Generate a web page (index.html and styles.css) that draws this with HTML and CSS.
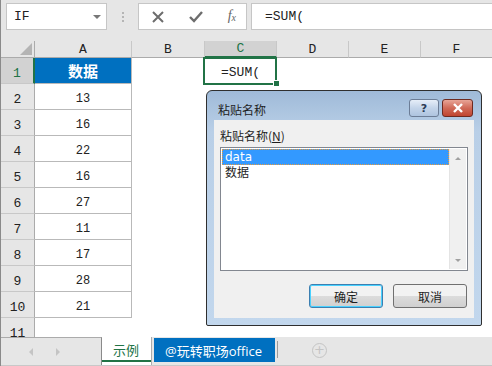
FILE: index.html
```html
<html lang="zh-CN">
<head>
  <meta charset="UTF-8" />
  <title>粘贴名称</title>
  <link rel="stylesheet" href="styles.css">
</head>
<body>
  <div id="app">
    <div class="formula-bar">
      <div class="name-box">
        <span>IF</span>
        <span class="caret"></span>
      </div>
      <div class="grip"><i></i><i></i><i></i></div>
      <div class="fx-buttons">
        <svg width="14" height="14" viewBox="0 0 14 14"><path d="M2 2 L12 12 M12 2 L2 12" stroke="#6d6d6d" stroke-width="2" fill="none"/></svg>
        <svg width="16" height="14" viewBox="0 0 16 14"><path d="M2 7 L6 11 L14 2" stroke="#6d6d6d" stroke-width="2.4" fill="none"/></svg>
        <span class="fx">f<span class="fx-x">x</span></span>
      </div>
      <div class="formula-input">=SUM(</div>
    </div>

    <div class="sheet">
      <div class="grid">
        <div class="corner"><span class="tri"></span></div>
        <div class="col-head">A</div>
        <div class="col-head">B</div>
        <div class="col-head active">C</div>
        <div class="col-head">D</div>
        <div class="col-head">E</div>
        <div class="col-head">F</div>

        <div class="row-head active">1</div>
        <div class="cell title">数据</div>
        <div class="cell"></div>
        <div class="cell editing">=SUM(</div>
        <div class="cell"></div><div class="cell"></div><div class="cell"></div>

        <div class="row-head">2</div><div class="cell num">13</div>
        <div class="cell"></div><div class="cell"></div><div class="cell"></div><div class="cell"></div><div class="cell"></div>
        <div class="row-head">3</div><div class="cell num">16</div>
        <div class="cell"></div><div class="cell"></div><div class="cell"></div><div class="cell"></div><div class="cell"></div>
        <div class="row-head">4</div><div class="cell num">22</div>
        <div class="cell"></div><div class="cell"></div><div class="cell"></div><div class="cell"></div><div class="cell"></div>
        <div class="row-head">5</div><div class="cell num">16</div>
        <div class="cell"></div><div class="cell"></div><div class="cell"></div><div class="cell"></div><div class="cell"></div>
        <div class="row-head">6</div><div class="cell num">27</div>
        <div class="cell"></div><div class="cell"></div><div class="cell"></div><div class="cell"></div><div class="cell"></div>
        <div class="row-head">7</div><div class="cell num">11</div>
        <div class="cell"></div><div class="cell"></div><div class="cell"></div><div class="cell"></div><div class="cell"></div>
        <div class="row-head">8</div><div class="cell num">17</div>
        <div class="cell"></div><div class="cell"></div><div class="cell"></div><div class="cell"></div><div class="cell"></div>
        <div class="row-head">9</div><div class="cell num">28</div>
        <div class="cell"></div><div class="cell"></div><div class="cell"></div><div class="cell"></div><div class="cell"></div>
        <div class="row-head">10</div><div class="cell num">21</div>
        <div class="cell"></div><div class="cell"></div><div class="cell"></div><div class="cell"></div><div class="cell"></div>
        <div class="row-head">11</div><div class="cell"></div>
        <div class="cell"></div><div class="cell"></div><div class="cell"></div><div class="cell"></div><div class="cell"></div>
      </div>

      <div class="dialog">
        <div class="dialog-title">
          <span class="caption">粘贴名称</span>
          <span class="cap-btn help">?</span>
          <span class="cap-btn close">
            <svg width="12" height="10" viewBox="0 0 12 10"><path d="M2 1 L10 9 M10 1 L2 9" stroke="#fff" stroke-width="2.4" fill="none"/></svg>
          </span>
        </div>
        <div class="dialog-body">
          <div class="label">粘贴名称(<u>N</u>)</div>
          <div class="listbox">
            <div class="items">
              <div class="item selected">data</div>
              <div class="item">数据</div>
            </div>
            <div class="scrollbar">
              <span class="arrow up"></span>
              <span class="arrow down"></span>
            </div>
          </div>
          <div class="actions">
            <button class="btn default">确定</button>
            <button class="btn">取消</button>
          </div>
        </div>
      </div>
    </div>

    <div class="tabs">
      <div class="tab-nav">
        <span class="nav left"></span>
        <span class="nav right"></span>
      </div>
      <div class="tab current">示例</div>
      <div class="tab blue">@玩转职场office</div>
      <span class="tab-sep"></span>
      <span class="add-sheet">+</span>
    </div>
  </div>
</body>
</html>
```

FILE: styles.css
```css
* {
  box-sizing: border-box;
  margin: 0;
  padding: 0;
}

body {
  width: 492px;
  height: 366px;
  overflow: hidden;
  background: #ffffff;
  font-family: "Liberation Mono", "DejaVu Sans Mono", monospace;
}

#app {
  height: 366px;
  display: flex;
  flex-direction: column;
  border-left: 1px solid #8a8a8a;
}

/* formula bar */

.formula-bar {
  height: 41px;
  flex: none;
  background: #e6e6e6;
  display: flex;
  align-items: flex-start;
  padding-top: 3px;
}

.name-box {
  width: 101px;
  height: 27px;
  margin-left: 5px;
  background: #fff;
  border: 1px solid #c6c6c6;
  display: flex;
  align-items: center;
  justify-content: space-between;
  padding: 0 5px 0 7px;
  font-size: 13px;
  color: #222;
}

.caret {
  width: 0;
  height: 0;
  border-left: 4px solid transparent;
  border-right: 4px solid transparent;
  border-top: 4px solid #777;
}

.grip {
  width: 31px;
  height: 27px;
  display: flex;
  flex-direction: column;
  align-items: center;
  justify-content: center;
  gap: 2px;
}

.grip i {
  width: 2px;
  height: 2px;
  background: #b5b5b5;
}

.fx-buttons {
  width: 109px;
  height: 27px;
  background: #fff;
  border: 1px solid #c6c6c6;
  display: flex;
  align-items: center;
  justify-content: space-between;
  padding: 0 10px 0 12px;
}

.fx {
  font-family: "Liberation Serif", serif;
  font-style: italic;
  font-size: 14px;
  color: #666;
  line-height: 14px;
}

.fx-x {
  font-size: 10px;
  position: relative;
  top: 1px;
}

.formula-input {
  flex: 1;
  height: 27px;
  margin-left: 4px;
  background: #fff;
  border: 1px solid #c6c6c6;
  border-right: none;
  padding-left: 13px;
  line-height: 25px;
  font-size: 13px;
  color: #222;
}

/* sheet */

.sheet {
  position: relative;
  height: 296px;
  flex: none;
  overflow: hidden;
}

.grid {
  display: grid;
  grid-template-columns: 34px 97px 73px 72px 72px 72px 72px;
  grid-template-rows: 17px repeat(11, 26px);
  font-size: 12px;
  color: #222;
}

.corner {
  background: #e6e6e6;
  border-right: 1px solid #ababab;
  border-bottom: 1px solid #ababab;
  position: relative;
}

.tri {
  position: absolute;
  right: 2px;
  bottom: 2px;
  width: 0;
  height: 0;
  border-left: 12px solid transparent;
  border-bottom: 12px solid #b4b4b4;
}

.col-head {
  background: #e6e6e6;
  border-right: 1px solid #c8c8c8;
  border-bottom: 1px solid #ababab;
  display: flex;
  align-items: center;
  justify-content: center;
  font-size: 13px;
}

.col-head.active {
  background: #d2d2d2;
  color: #217346;
  border-bottom: 2px solid #217346;
}

.row-head {
  background: #e6e6e6;
  border-right: 1px solid #ababab;
  border-bottom: 1px solid #c8c8c8;
  display: flex;
  align-items: flex-end;
  justify-content: center;
  padding-bottom: 2px;
  font-size: 13px;
}

.row-head.active {
  background: #d2d2d2;
  color: #217346;
  border-right: 2px solid #217346;
}

.cell {
  display: flex;
  align-items: center;
  justify-content: center;
}

.cell.num,
.grid > .cell:nth-child(7n+2) {
  border-right: 1px solid #b9b9b9;
  border-bottom: 1px solid #b9b9b9;
}

.grid > .cell:nth-child(7n+2):nth-last-child(-n+6) {
  border: none;
}

.cell.num {
  padding-top: 4px;
}

.cell.title {
  background: #0070c0;
  color: #fff;
  font-family: "Noto Sans CJK SC", sans-serif;
  font-weight: bold;
  font-size: 15px;
}

.cell.editing {
  position: relative;
  justify-content: flex-start;
  padding: 3px 0 0 16px;
  font-size: 13px;
}

.cell.editing::before {
  content: "";
  position: absolute;
  left: -2px;
  top: -1px;
  right: 0;
  bottom: -1px;
  border: 2px solid #217346;
}

.cell.editing::after {
  content: "";
  position: absolute;
  right: -3px;
  bottom: -3px;
  width: 5px;
  height: 5px;
  background: #217346;
  border: 1px solid #fff;
}

/* paste name dialog */

.dialog {
  position: absolute;
  left: 205px;
  top: 49px;
  width: 276px;
  height: 236px;
  border: 1px solid #2f2f2f;
  border-radius: 6px 6px 2px 2px;
  background: linear-gradient(#9fbad8, #b9cfe7 40px, #c2d7ed);
  padding: 0 7px 7px 7px;
  display: flex;
  flex-direction: column;
  font-family: "Noto Sans CJK SC", sans-serif;
  font-size: 12px;
  color: #1e1e1e;
}

.dialog-title {
  height: 29px;
  flex: none;
  display: flex;
  align-items: flex-start;
  padding: 8px 1px 0 4px;
}

.caption {
  flex: 1;
  line-height: 18px;
  padding-top: 2px;
}

.cap-btn {
  height: 18px;
  border-radius: 3px;
  display: flex;
  align-items: center;
  justify-content: center;
}

.help {
  width: 30px;
  margin-right: 3px;
  background: linear-gradient(#e6eef8, #c3d4e9 50%, #aec4df);
  border: 1px solid #6c7d96;
  color: #2a3a55;
  font-family: "DejaVu Sans", sans-serif;
  font-weight: bold;
  font-size: 11px;
}

.close {
  width: 31px;
  background: linear-gradient(#e8a597, #d06a58 50%, #c04530);
  border: 1px solid #6e2a20;
}

.dialog-body {
  flex: 1;
  background: #f0f0f0;
  padding: 8px 6px 0 6px;
  display: flex;
  flex-direction: column;
}

.label {
  line-height: 16px;
}

.label u {
  text-decoration: underline;
}

.listbox {
  margin-top: 3px;
  height: 124px;
  border: 1px solid #828790;
  background: #fff;
  display: flex;
  padding: 1px;
}

.items {
  flex: 1;
}

.item {
  height: 16px;
  line-height: 16px;
  padding-left: 3px;
  font-family: "DejaVu Sans", "Noto Sans CJK SC", sans-serif;
  font-size: 12px;
}

.item.selected {
  background: #3399ff;
  color: #fff;
  outline: 1px dotted #e89a3a;
  outline-offset: -1px;
}

.scrollbar {
  width: 17px;
  background: #f0f0f0;
  border-left: 1px solid #e4e4e4;
  display: flex;
  flex-direction: column;
  justify-content: space-between;
  align-items: center;
  padding: 8px 0 7px;
}

.arrow {
  width: 0;
  height: 0;
  border-left: 3px solid transparent;
  border-right: 3px solid transparent;
}

.arrow.up {
  border-bottom: 3px solid #a0a0a0;
}

.arrow.down {
  border-top: 3px solid #a0a0a0;
}

.actions {
  margin-top: 13px;
  display: flex;
  justify-content: flex-end;
  gap: 10px;
  padding-right: 1px;
}

.btn {
  width: 74px;
  height: 24px;
  border: 1px solid #707070;
  border-radius: 3px;
  background: linear-gradient(#f2f2f2 50%, #dcdcdc 50%, #d0d0d0);
  font-family: "Noto Sans CJK SC", sans-serif;
  font-size: 12px;
  color: #1e1e1e;
}

.btn.default {
  border-color: #3c7fb1;
  box-shadow: inset 0 0 0 1px #48d1ff;
}

/* sheet tabs */

.tabs {
  height: 29px;
  flex: none;
  background: #e6e6e6;
  border-bottom: 1px solid #c8c8c8;
  display: flex;
  align-items: flex-start;
  font-family: "Noto Sans CJK SC", sans-serif;
  font-size: 13px;
}

.tab-nav {
  width: 101px;
  height: 100%;
  border-top: 1px solid #ababab;
  border-right: 1px solid #8a8a8a;
  display: flex;
  align-items: center;
  padding-left: 28px;
  gap: 23px;
}

.nav {
  width: 0;
  height: 0;
  border-top: 4px solid transparent;
  border-bottom: 4px solid transparent;
}

.nav.left {
  border-right: 4px solid #c4c4c4;
}

.nav.right {
  border-left: 4px solid #c4c4c4;
}

.tab {
  height: 24px;
  display: flex;
  align-items: center;
}

.tab.current {
  width: 50px;
  height: 28px;
  background: #fff;
  color: #217346;
  padding: 0 0 3px 11px;
  box-shadow: inset 0 -3px 0 #fff, inset 0 -5px 0 #217346;
  border-right: 1px solid #ababab;
}

.tab.blue {
  margin: 1px 0 0 2px;
  width: 121px;
  background: #0070c0;
  color: #fff;
  padding-left: 11px;
  font-family: "Open Sans", "Noto Sans CJK SC", sans-serif;
}

.tab-sep {
  width: 1px;
  height: 17px;
  margin: 4px 0 0 2px;
  background: #9a9a9a;
}

.add-sheet {
  width: 15px;
  height: 15px;
  margin: 6px 0 0 34px;
  border: 1px solid #c4c4c4;
  border-radius: 50%;
  color: #c4c4c4;
  font-family: "DejaVu Sans", sans-serif;
  font-size: 13px;
  line-height: 12px;
  text-align: center;
}
```
